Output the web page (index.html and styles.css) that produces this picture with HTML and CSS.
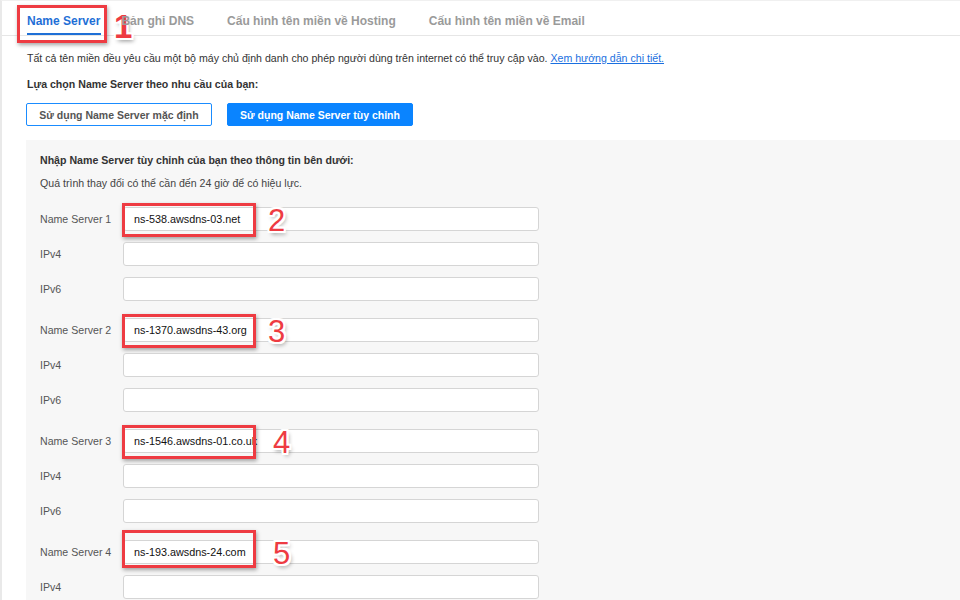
FILE: index.html
```html
<!DOCTYPE html>
<html lang="vi">
<head>
<meta charset="utf-8">
<title>Name Server</title>
<link rel="stylesheet" href="styles.css">
</head>
<body>
<div class="frame">
  <nav class="tabs">
    <div class="tab active">Name Server
      <span class="mark tab-mark"></span>
      <span class="num num-1">1</span>
    </div>
    <div class="tab tab-dns">Bản ghi DNS</div>
    <div class="tab">Cấu hình tên miền về Hosting</div>
    <div class="tab">Cấu hình tên miền về Email</div>
  </nav>
  <main class="content">
    <p class="intro">Tất cả tên miền đều yêu cầu một bộ máy chủ định danh cho phép người dùng trên internet có thể truy cập vào. <a href="#" class="link">Xem hướng dẫn chi tiết.</a></p>
    <p class="choose">Lựa chọn Name Server theo nhu cầu của bạn:</p>
    <div class="buttons">
      <button class="btn btn-outline">Sử dụng Name Server mặc định</button>
      <button class="btn btn-primary">Sử dụng Name Server tùy chỉnh</button>
    </div>
    <section class="panel">
      <p class="panel-title">Nhập Name Server tùy chỉnh của bạn theo thông tin bên dưới:</p>
      <p class="panel-note">Quá trình thay đổi có thể cần đến 24 giờ để có hiệu lực.</p>

      <div class="group">
        <div class="row"><label class="label">Name Server 1</label><div class="field"><input class="input" value="ns-538.awsdns-03.net"><span class="mark in-mark"></span><span class="num num-in">2</span></div></div>
        <div class="row"><label class="label">IPv4</label><div class="field"><input class="input"></div></div>
        <div class="row"><label class="label">IPv6</label><div class="field"><input class="input"></div></div>
      </div>
      <div class="group">
        <div class="row"><label class="label">Name Server 2</label><div class="field"><input class="input" value="ns-1370.awsdns-43.org"><span class="mark in-mark"></span><span class="num num-in">3</span></div></div>
        <div class="row"><label class="label">IPv4</label><div class="field"><input class="input"></div></div>
        <div class="row"><label class="label">IPv6</label><div class="field"><input class="input"></div></div>
      </div>
      <div class="group">
        <div class="row"><label class="label">Name Server 3</label><div class="field"><input class="input" value="ns-1546.awsdns-01.co.uk"><span class="mark in-mark"></span><span class="num num-in num-wide">4</span></div></div>
        <div class="row"><label class="label">IPv4</label><div class="field"><input class="input"></div></div>
        <div class="row"><label class="label">IPv6</label><div class="field"><input class="input"></div></div>
      </div>
      <div class="group">
        <div class="row"><label class="label">Name Server 4</label><div class="field"><input class="input" value="ns-193.awsdns-24.com"><span class="mark in-mark in-mark-tall"></span><span class="num num-in num-wide">5</span></div></div>
        <div class="row"><label class="label">IPv4</label><div class="field"><input class="input"></div></div>
      </div>
    </section>
  </main>
</div>
</body>
</html>
```
FILE: styles.css
```css
* { box-sizing: border-box; }
html, body { margin: 0; padding: 0; background: #fff; }
body {
  font-family: "Liberation Sans", Arial, sans-serif;
  color: #333;
  width: 960px;
  height: 600px;
  overflow: hidden;
}
.frame {
  border-left: 2px solid #e9e9e9;
  border-top: 1px solid #f0f0f0;
  height: 600px;
}
.tabs {
  display: flex;
  border-bottom: 1px solid #e6e6e6;
  padding-left: 25px;
  height: 35px;
}
.tab {
  position: relative;
  font-size: 12px;
  font-weight: bold;
  color: #9a9a9a;
  padding-top: 13px;
  margin-right: 33px;
  white-space: nowrap;
}
.tab-dns { margin-left: -13px; }
.tab.active {
  color: #1f6fd6;
  border-bottom: 2px solid #1f6fd6;
  height: 34px;
  padding-left: 0;
  padding-right: 1px;
}
.mark {
  position: absolute;
  border: 3px solid #ee3b42;
  box-shadow: 1px 2px 4px rgba(0,0,0,0.35);
  pointer-events: none;
}
.tab-mark {
  left: -10px;
  top: 4px;
  width: 90px;
  height: 38px;
}
.num {
  position: absolute;
  font-family: "Liberation Sans", Arial, sans-serif;
  font-size: 33px;
  color: #ee3b42;
  line-height: 1;
  text-shadow:
    -2px 0 0 #fff, 2px 0 0 #fff, 0 -2px 0 #fff, 0 2px 0 #fff,
    -2px -2px 0 #fff, 2px 2px 0 #fff, -2px 2px 0 #fff, 2px -2px 0 #fff,
    2px 3px 4px rgba(0,0,0,0.45);
}
.num-1 {
  left: 87px;
  top: 9px;
  font-weight: bold;
}
.content {
  padding-left: 25px;
}
.intro {
  font-size: 10.6px;
  margin: 15px 0 0;
  line-height: 14px;
  color: #333;
}
.link {
  color: #1a6fe0;
  text-decoration: underline;
}
.choose {
  font-size: 10.6px;
  font-weight: bold;
  margin: 12px 0 0;
  line-height: 14px;
  color: #333;
}
.buttons {
  display: flex;
  gap: 15px;
  margin-top: 12px;
  margin-left: -1px;
}
.btn {
  font-family: "Liberation Sans", Arial, sans-serif;
  font-size: 10.5px;
  font-weight: bold;
  height: 23px;
  padding: 0;
  border-radius: 2px;
  white-space: nowrap;
  text-align: center;
}
.btn-outline {
  background: #fff;
  border: 1px solid #1a8cff;
  color: #555;
  width: 186px;
}
.btn-primary {
  background: #0a84ff;
  border: 1px solid #0a84ff;
  color: #fff;
  width: 186px;
}
.panel {
  margin-top: 14px;
  margin-left: -1px;
  background: #f7f7f7;
  padding: 13px 0 20px 14px;
  height: 470px;
}
.panel-title {
  font-size: 10.6px;
  font-weight: bold;
  margin: 0;
  line-height: 14px;
  color: #333;
}
.panel-note {
  font-size: 10.6px;
  margin: 9px 0 0;
  line-height: 14px;
  color: #444;
}
.group {
  display: flex;
  flex-direction: column;
  gap: 11px;
  margin-top: 17px;
}
.group:first-of-type { margin-top: 17px; }
.row {
  display: flex;
  align-items: center;
  height: 24px;
}
.label {
  width: 83px;
  font-size: 10.6px;
  color: #555;
}
.field {
  position: relative;
}
.input {
  display: block;
  width: 416px;
  height: 24px;
  border: 1px solid #d5d5d5;
  border-radius: 3px;
  background: #fff;
  padding: 0 0 0 10px;
  font-family: "Liberation Sans", Arial, sans-serif;
  font-size: 10.8px;
  color: #111;
  outline: none;
}
.in-mark {
  left: -1px;
  top: -4px;
  width: 134px;
  height: 34px;
}
.in-mark-tall {
  top: -10px;
  height: 38px;
}
.num-in {
  left: 145px;
  top: -2px;
  font-size: 31px;
}
.num-wide { left: 150px; }
```
